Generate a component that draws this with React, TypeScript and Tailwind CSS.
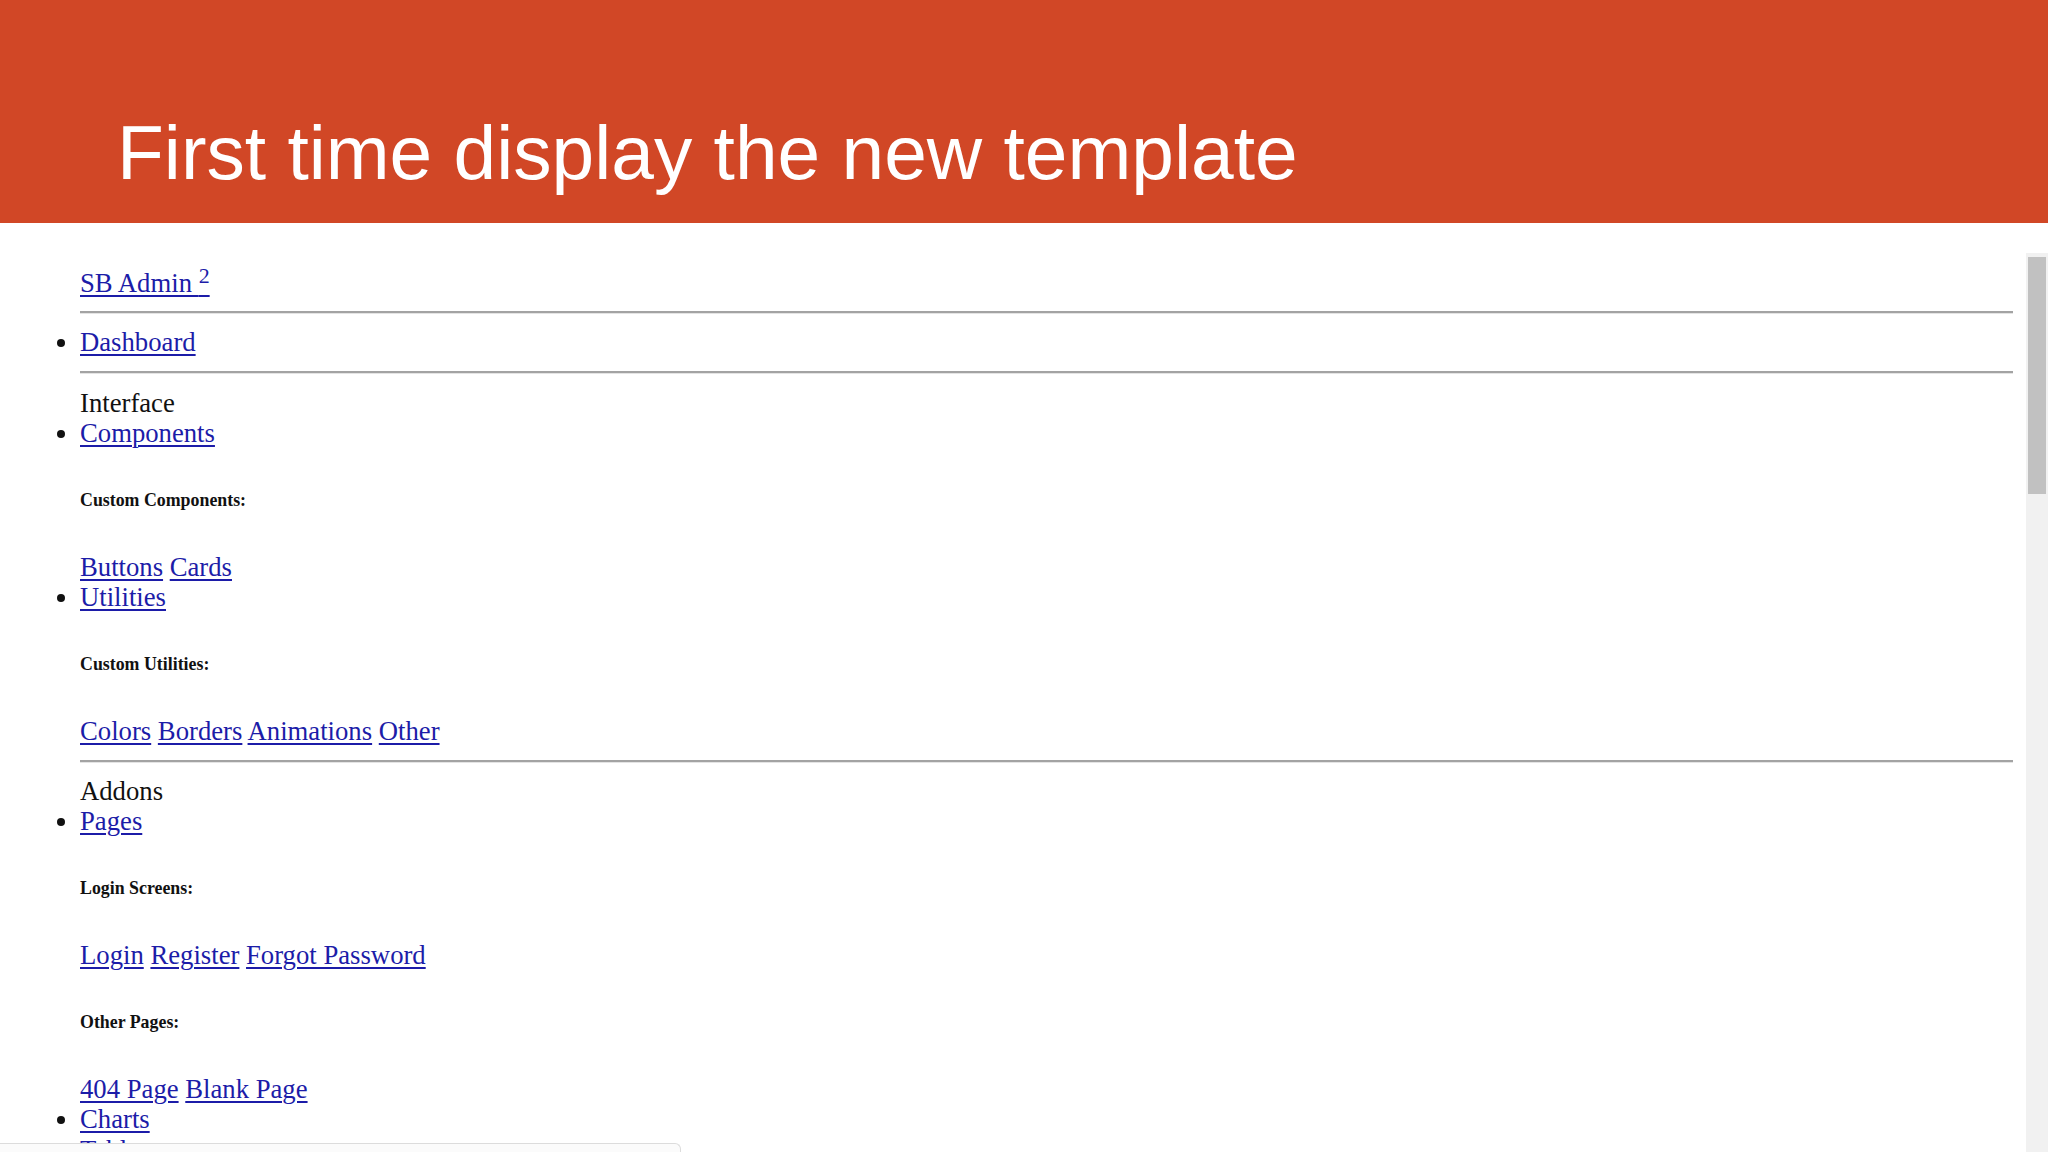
import React from 'react';

const serif = "font-['Liberation_Serif','Times_New_Roman',serif]";

const Hr = () => (
  <div className="my-[13.4px] border-t-2 border-b border-t-[#a3a3a3] border-b-[#e4e4e4]" />
);

const Link = ({ children }: { children: React.ReactNode }) => (
  <a href="#" className="text-[#1c1ca8] underline decoration-[1.5px] underline-offset-[3px]">
    {children}
  </a>
);

const Sub = ({ title }: { title: string }) => (
  <h6 className="my-[41.4px] text-[17.85px] leading-[20.4px] font-bold text-[#111]">{title}</h6>
);

const Links = ({ items }: { items: string[] }) => (
  <div>
    {items.map((item, i) => (
      <React.Fragment key={item}>
        {i > 0 && ' '}
        <Link>{item}</Link>
      </React.Fragment>
    ))}
  </div>
);

export default function App() {
  return (
    <div className="relative h-[1152px] w-[2048px] overflow-hidden bg-white">
      {/* slide title */}
      <header className="h-[223px] bg-[#D14726] pl-[117px] pt-[115px]">
        <h1 className="font-['Liberation_Sans',Arial,sans-serif] text-[76.7px] leading-none text-white">
          First time display the new template
        </h1>
      </header>

      {/* browser viewport with the unstyled template */}
      <div className="flex h-[929px]">
        <div className={`flex-1 px-[13px] pt-[39.5px] ${serif} text-[26.7px] leading-[30.45px] text-[#111]`}>
          <ul className="list-disc pl-[67px]">
            <div className="h-[35px] pt-[5px]">
              <a href="#" className="text-[#1c1ca8] underline decoration-[1.5px] underline-offset-[3px]">
                SB Admin <sup className="relative top-[-9px] align-baseline text-[22px] leading-none">2</sup>
              </a>
            </div>
            <Hr />
            <li>
              <Link>Dashboard</Link>
            </li>
            <Hr />
            <div>Interface</div>
            <li>
              <Link>Components</Link>
              <Sub title="Custom Components:" />
              <Links items={['Buttons', 'Cards']} />
            </li>
            <li>
              <Link>Utilities</Link>
              <Sub title="Custom Utilities:" />
              <Links items={['Colors', 'Borders', 'Animations', 'Other']} />
            </li>
            <Hr />
            <div>Addons</div>
            <li>
              <Link>Pages</Link>
              <Sub title="Login Screens:" />
              <Links items={['Login', 'Register', 'Forgot Password']} />
              <Sub title="Other Pages:" />
              <Links items={['404 Page', 'Blank Page']} />
            </li>
            <li>
              <Link>Charts</Link>
            </li>
            <li>
              <Link>Tables</Link>
            </li>
          </ul>
        </div>

        {/* scrollbar */}
        <div className="mt-[30px] w-[22px] bg-[#f1f1f1] px-[2px] pt-[4px]">
          <div className="h-[237px] bg-[#c1c1c1]" />
        </div>
      </div>

      {/* bottom popup edge */}
      <div className="absolute left-0 top-[1143px] h-[20px] w-[681px] rounded-tr-[6px] border-t border-r border-[#dcdcdc] bg-[#fbfbfb]" />
    </div>
  );
}
